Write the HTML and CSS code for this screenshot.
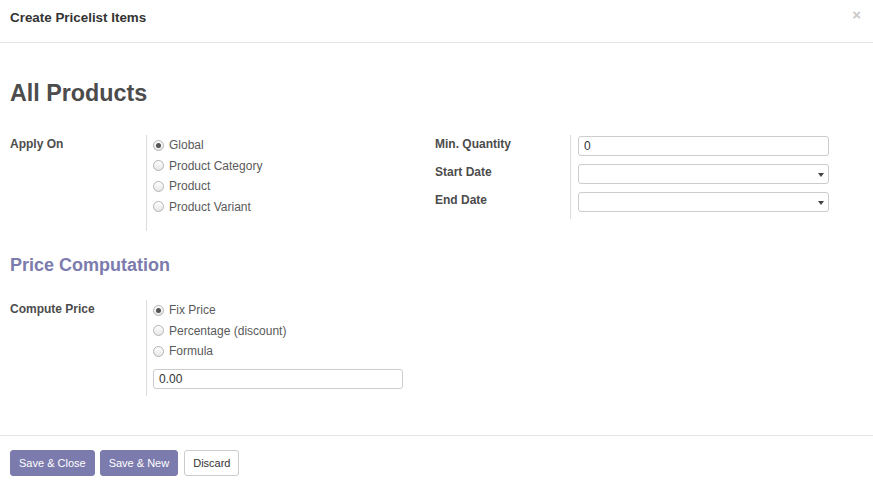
FILE: index.html
```html
<!DOCTYPE html>
<html>
<head>
<meta charset="utf-8">
<link rel="stylesheet" href="styles.css">
</head>
<body>
<div class="modal">
  <header class="modal-header">
    <h4 class="modal-title">Create Pricelist Items</h4>
    <span class="close">×</span>
  </header>
  <main class="modal-body">
    <h1 class="title">All Products</h1>
    <div class="groups groups-top">
      <div class="group">
        <div class="row">
          <div class="label">Apply On</div>
          <div class="field radios radios-apply">
            <label class="radio"><span class="dot checked"></span>Global</label>
            <label class="radio"><span class="dot"></span>Product Category</label>
            <label class="radio"><span class="dot"></span>Product</label>
            <label class="radio"><span class="dot"></span>Product Variant</label>
          </div>
        </div>
      </div>
      <div class="group">
        <div class="row">
          <div class="label-col">
            <div class="label sm">Min. Quantity</div>
            <div class="label sm">Start Date</div>
            <div class="label sm">End Date</div>
          </div>
          <div class="field inputs">
            <div class="line"><div class="input">0</div></div>
            <div class="line"><div class="input select"><span class="caret"></span></div></div>
            <div class="line"><div class="input select"><span class="caret"></span></div></div>
          </div>
        </div>
      </div>
    </div>
    <h2 class="section">Price Computation</h2>
    <div class="groups groups-price">
      <div class="group">
        <div class="row">
          <div class="label">Compute Price</div>
          <div class="field radios radios-price">
            <label class="radio"><span class="dot checked"></span>Fix Price</label>
            <label class="radio"><span class="dot"></span>Percentage (discount)</label>
            <label class="radio"><span class="dot"></span>Formula</label>
            <div class="input price">0.00</div>
          </div>
        </div>
      </div>
      <div class="group"></div>
    </div>
  </main>
  <footer class="modal-footer">
    <button class="btn primary">Save &amp; Close</button>
    <button class="btn primary">Save &amp; New</button>
    <button class="btn default">Discard</button>
  </footer>
</div>
</body>
</html>
```

FILE: styles.css
```css
* { box-sizing: border-box; }
html, body {
  margin: 0;
  padding: 0;
  background: #fff;
}
body {
  font-family: "Liberation Sans", Arial, sans-serif;
  font-size: 12px;
  color: #4c4c4c;
  width: 873px;
  height: 486px;
  overflow: hidden;
}
.modal {
  display: flex;
  flex-direction: column;
  height: 486px;
}
.modal-header {
  height: 43px;
  border-bottom: 1px solid #e5e5e5;
  display: flex;
  align-items: center;
  justify-content: space-between;
  padding: 0 10px 0 10px;
  flex: none;
}
.modal-title {
  margin: 0;
  font-size: 13.4px;
  font-weight: bold;
  color: #333;
  position: relative;
  top: -4px;
}
.close {
  font-size: 15px;
  color: #c8c8c8;
  font-weight: bold;
  position: relative;
  top: -7px;
  right: 2px;
}
.modal-body {
  flex: 1;
  padding: 0 10px;
}
.title {
  margin: 36px 0 0 0;
  font-size: 23.3px;
  line-height: 28px;
  font-weight: bold;
  color: #4c4c4c;
}
.groups {
  display: grid;
  grid-template-columns: 400px 401px;
  column-gap: 25px;
}
.groups-top {
  margin-top: 28px;
}
.row {
  display: flex;
}
.label {
  width: 136px;
  flex: none;
  font-weight: bold;
  line-height: 14px;
  padding-top: 2px;
  color: #4c4c4c;
}
.label-col {
  width: 135px;
  flex: none;
}
.label-col .label {
  height: 28px;
  width: auto;
}
.field {
  flex: 1;
  min-width: 0;
  border-left: 1px solid #ddd;
  padding: 0 8px 0 6px;
}
.radios-apply {
  padding-bottom: 14px;
}
.radio {
  display: flex;
  align-items: center;
  height: 20.5px;
  color: #5a5a5a;
}
.dot {
  width: 11px;
  height: 11px;
  border-radius: 50%;
  border: 1px solid #b4b4b4;
  background: linear-gradient(#fff, #e6e6e6);
  margin-right: 5px;
  position: relative;
  flex: none;
}
.dot.checked::after {
  content: "";
  position: absolute;
  left: 2px;
  top: 2px;
  width: 5px;
  height: 5px;
  border-radius: 50%;
  background: #555;
}
.inputs {
  padding-left: 7px;
  padding-right: 7px;
}
.line {
  height: 28px;
  padding-top: 1px;
}
.input {
  height: 20px;
  border: 1px solid #ccc;
  border-radius: 3px;
  padding: 0 5px;
  line-height: 18px;
  color: #333;
  font-size: 12px;
  position: relative;
}
.caret {
  position: absolute;
  right: 4px;
  top: 8px;
  width: 0;
  height: 0;
  border-left: 3px solid transparent;
  border-right: 3px solid transparent;
  border-top: 4px solid #444;
}
.section {
  margin: 23px 0 0 0;
  font-size: 18px;
  line-height: 22px;
  font-weight: bold;
  color: #7c7bad;
}
.groups-price {
  margin-top: 24px;
}
.radios-price {
  padding-bottom: 7px;
}
.radios-price .input {
  margin-top: 7px;
  width: 250px;
}
.modal-footer {
  height: 51px;
  border-top: 1px solid #e5e5e5;
  display: flex;
  align-items: flex-start;
  gap: 5px;
  padding: 14px 10px 0 10px;
  flex: none;
}
.btn {
  font-family: "Liberation Sans", Arial, sans-serif;
  font-size: 11px;
  height: 26px;
  border-radius: 3px;
  padding: 0 8px;
  cursor: pointer;
}
.btn.primary {
  background: #7c7bad;
  border: 1px solid #7c7bad;
  color: #fff;
}
.btn.default {
  background: #fff;
  border: 1px solid #ccc;
  color: #333;
  margin-left: 1px;
}
```
